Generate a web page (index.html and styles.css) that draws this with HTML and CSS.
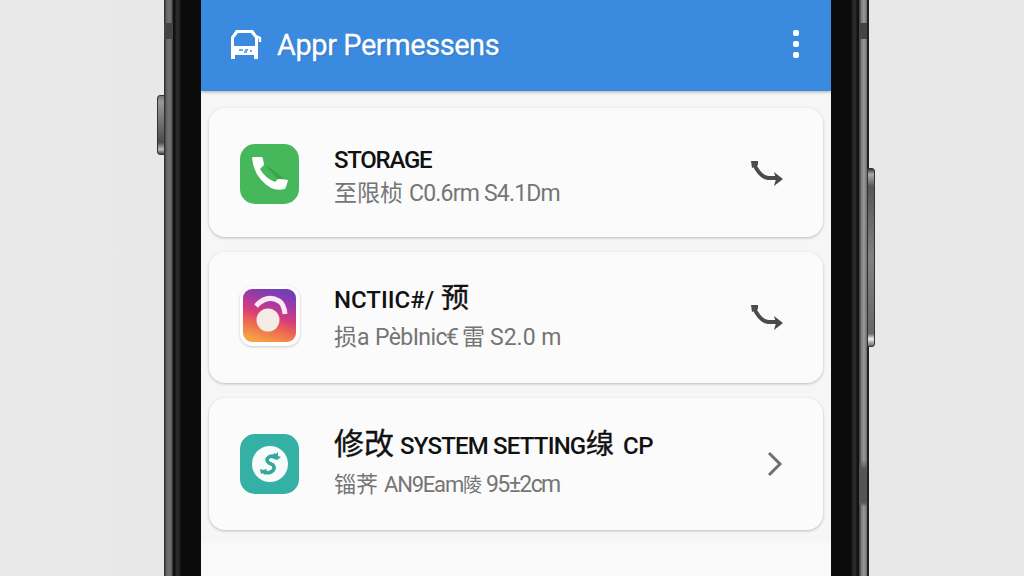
FILE: index.html
```html
<!DOCTYPE html>
<html lang="zh">
<head>
  <meta charset="UTF-8" />
  <meta name="viewport" content="width=device-width, initial-scale=1.0"/>
  <title>App Permissions</title>
  <link rel="stylesheet" href="styles.css">
</head>
<body>

  <div class="phone">
    <!-- Side buttons -->
    <div class="side-btn side-left"></div>
    <div class="side-btn side-right"></div>

    <div class="rail rail-left"></div>
    <div class="bezel bezel-left"></div>

    <div class="screen">
      <header class="app-bar">
        <svg class="bar-icon" viewBox="0 0 32 32" width="32" height="32">
          <path d="M0 31V9l5-7h17l5 7v22h-4v-4H4v4z" fill="#fff"/>
          <path d="M3 18v-8l4-5h13l4 5v8z" fill="#3a8adf"/>
          <path d="M25 8l4 2v4" fill="none" stroke="#fff" stroke-width="2.4"/>
          <path d="M8 22h4m2 0h3m2 1h2m-8 1h3" stroke="#3a8adf" stroke-width="1.4"/>
        </svg>
        <h1>Appr Permessens</h1>
        <div class="more"><i></i><i></i><i></i></div>
      </header>

      <main class="list">
        <section class="card card-storage">
          <svg class="icon" viewBox="0 0 60 60" width="60" height="60">
            <rect width="59" height="60" rx="15" fill="#47b75b"/>
            <path d="M25 22l7 3 11 9 1 2-6-1z" fill="#3ba34c"/>
            <path d="M12 14q0-1 2-1h8l1 2 1 6-4 4q5 9 15 13l3-3q5 0 10 1l-1 4-2 5q-8 2-14-1Q14 34 12 14z" fill="#fff"/>
          </svg>
          <div class="info">
            <h2><span class="storage">STORAGE</span></h2>
            <p><span class="cjk-lead">至限桢</span><span class="used">C0.6rm S4.1Dm</span></p>
          </div>
          <svg class="arrow" viewBox="0 0 36 28" width="36" height="28">
            <path d="M5 4Q11 17 19 18H29" fill="none" stroke="#4b4b4b" stroke-width="4"/>
            <path d="M2 1h7v4l-6 3zM25 12l9 7-9 7 2-7z" fill="#4b4b4b"/>
          </svg>
        </section>

        <section class="card">
          <svg class="icon icon-photo" viewBox="0 0 60 60" width="60" height="60">
            <defs>
              <linearGradient id="photo" x1="0.65" y1="0" x2="0.35" y2="1">
                <stop offset="0" stop-color="#6f3fb8"/>
                <stop offset="0.25" stop-color="#a03aa6"/>
                <stop offset="0.5" stop-color="#d83c7a"/>
                <stop offset="0.72" stop-color="#ee6a50"/>
                <stop offset="1" stop-color="#f6a344"/>
              </linearGradient>
            </defs>
            <rect width="59" height="60" rx="13" fill="#fff"/>
            <rect x="3" y="3" width="53" height="53" rx="9" fill="url(#photo)"/>
            <path d="M16 20Q27 8 39 15Q44 18 45 28" fill="none" stroke="#fae9f4" stroke-width="5"/>
            <circle cx="28" cy="34" r="11.5" fill="#f4ebe7"/>
          </svg>
          <div class="info">
            <h2><span class="notify">NCTIIC#/</span><span class="big">预</span></h2>
            <p><span class="lead-a">损a</span><span class="public">PèbInic</span><span class="euro">€</span><span class="thunder">雷</span><span>S2.0 m</span></p>
          </div>
          <svg class="arrow" viewBox="0 0 36 28" width="36" height="28">
            <path d="M5 4Q11 17 19 18H29" fill="none" stroke="#4b4b4b" stroke-width="4"/>
            <path d="M2 1h7v4l-6 3zM25 12l9 7-9 7 2-7z" fill="#4b4b4b"/>
          </svg>
        </section>

        <section class="card card-system">
          <svg class="icon" viewBox="0 0 60 60" width="60" height="60">
            <rect width="59" height="60" rx="15" fill="#35b0a5"/>
            <circle cx="30" cy="30" r="18" fill="#f7fbfa"/>
            <path d="M36 24q-3-3-7-1-4 3 0 6l4 2q3 4-2 7-5 2-8-1" fill="none" stroke="#35a79c" stroke-width="3.6"/>
            <path d="M32 24l2-5 2 1 2-2v4l3 1-4 3zM20 35l3 1 4-1-2 6-2-2-2 1z" fill="#35a79c"/>
          </svg>
          <div class="info">
            <h2><span class="big modify">修改</span><span class="system">SYSTEM SETTING</span><span class="big thread">缐</span><span class="cp">CP</span></h2>
            <p><span class="lead-b">锱荠</span><span class="steam">AN9Eam</span><span class="hill">陵</span><span class="size">95±2cm</span></p>
          </div>
          <svg class="arrow" viewBox="0 0 36 28" width="36" height="28">
            <path d="M20 3l11 11-11 11" fill="none" stroke="#707070" stroke-width="3"/>
          </svg>
        </section>
      </main>

      <div class="sheet"></div>
    </div>

    <div class="bezel bezel-right"></div>
    <div class="rail rail-right"></div>
  </div>

</body>
</html>
```
FILE: styles.css
```css
* {
  box-sizing: border-box;
}

body {
  margin: 0;
  height: 576px;
  overflow: hidden;
  background: linear-gradient(90deg, #e9e9e9, #e6e6e5 50%, #e8e8e8);
  font-family: Roboto, "Noto Sans CJK SC", sans-serif;
}

.phone {
  position: relative;
  display: flex;
  width: 705px;
  height: 576px;
  margin-left: 164px;
}

.rail-left {
  width: 9px;
  background:
    linear-gradient(#444, #444) 0 23px / 9px 16px no-repeat,
    linear-gradient(90deg, #333 0 1px, #626262 2px, #747577 6px, #555 8px, #222);
}

.rail-right {
  width: 10px;
  background:
    linear-gradient(#444, #444) 0 23px / 8px 16px no-repeat,
    linear-gradient(transparent, #555 20%, #555 90%, transparent) 0 460px / 8px 47px no-repeat,
    linear-gradient(90deg, #444 0 1px, #77787a 2px, #999a9c 5px, #6b6b6b 8px, #222 8px);
}

.bezel {
  width: 28px;
}

.bezel-left {
  background: linear-gradient(90deg, #111 0 2px, #292929 3px 6px, #0b0b0b 8px);
}

.bezel-right {
  background: linear-gradient(270deg, #111 0 2px, #292929 3px 6px, #0b0b0b 8px);
}

.side-btn {
  position: absolute;
  border: 1px solid #333;
}

.side-left {
  left: -7px;
  top: 95px;
  width: 8px;
  height: 60px;
  border-radius: 3px 0 0 3px;
  background: linear-gradient(#777, #999 10%, #4b4b4b 80%, #bbb 92%, #444);
}

.side-right {
  left: 703px;
  top: 168px;
  width: 8px;
  height: 179px;
  border-radius: 0 3px 3px 0;
  background: linear-gradient(#333, #aaa 3%, #555 10%, #808080 50%, #666 93%, #eee 96%, #666);
}

.screen {
  width: 630px;
  display: flex;
  flex-direction: column;
  background: #f6f6f6;
}

.app-bar {
  height: 91px;
  flex: none;
  display: flex;
  align-items: center;
  padding: 0 30px 3px 30px;
  background: #3a8adf;
  box-shadow: 0 1px 3px rgba(0, 0, 0, 0.3);
}

.app-bar h1 {
  margin: 2px 0 0 14px;
  flex: 1;
  color: #fff;
  font-size: 29px;
  font-weight: 400;
  letter-spacing: -0.45px;
  text-shadow: 1px 1px 1px rgba(20, 60, 120, 0.3);
  -webkit-text-stroke: 0.3px #fff;
  white-space: nowrap;
}

.more {
  display: flex;
  flex-direction: column;
  gap: 5px;
  width: 8px;
}

.more i {
  width: 6px;
  height: 6px;
  border-radius: 2px;
  background: #fff;
}

.list {
  display: grid;
  grid-template-rows: 129px 131px 132px;
  gap: 15px;
  padding: 17px 8px 0;
}

.card {
  display: flex;
  align-items: center;
  padding: 0 38px 0 31px;
  background: #fbfbfb;
  border-radius: 16px;
  box-shadow: 0 1px 3px rgba(0, 0, 0, 0.24);
}

.icon {
  flex: none;
}

.icon-photo {
  margin-bottom: 3px;
  border-radius: 13px;
  box-shadow: 0 1px 3px rgba(0, 0, 0, 0.2);
}

.info {
  flex: 1;
  margin-left: 34px;
  white-space: nowrap;
}

.info h2,
.info p {
  display: flex;
  align-items: baseline;
  margin: 0;
}

.info span {
  flex: none;
}

.info h2 {
  height: 40px;
  line-height: 36px;
  color: #111;
  font-size: 24px;
  font-weight: 500;
}

.info p {
  height: 34px;
  line-height: 34px;
  color: #757575;
  font-size: 23px;
}

.card-storage {
  padding-top: 3px;
}

.card-storage .info {
  padding-top: 4px;
}

.card-storage h2 {
  height: 35px;
}

.card-system h2 {
  height: 42px;
}

.arrow {
  flex: none;
}

/* Card titles */
.storage {
  letter-spacing: -1.25px;
}

.notify {
  width: 107px;
}

.big {
  font-size: 28px;
  font-weight: 400;
  -webkit-text-stroke: 0.4px #111;
}

.modify {
  width: 66px;
  font-size: 30px;
}

.system {
  width: 186px;
  letter-spacing: -0.8px;
}

.thread {
  width: 37px;
}

.cp {
  letter-spacing: -0.5px;
}

/* Card details */
.cjk-lead {
  width: 75px;
}

.used {
  letter-spacing: -0.8px;
}

.lead-a {
  width: 41px;
}

.public {
  width: 71px;
  letter-spacing: -0.6px;
}

.euro {
  width: 16px;
}

.thunder {
  width: 28px;
}

.lead-b {
  width: 50px;
  font-size: 22px;
}

.steam {
  width: 79px;
  font-size: 22px;
  letter-spacing: -1.2px;
}

.hill {
  width: 23px;
  font-size: 19px;
}

.size {
  letter-spacing: -1.6px;
}

.sheet {
  flex: 1;
  margin-top: 13px;
  background: #fafafa;
}
```
